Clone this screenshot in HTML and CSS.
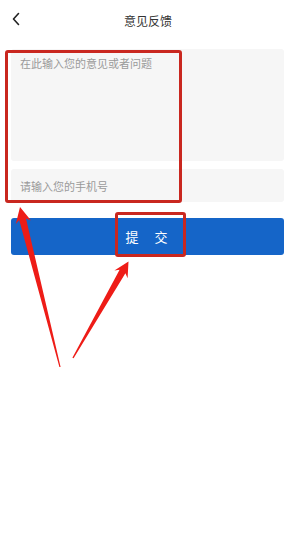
FILE: index.html
```html
<!DOCTYPE html>
<html lang="zh-CN">
<head>
  <meta charset="UTF-8">
  <meta name="viewport" content="width=device-width, initial-scale=1.0">
  <title>意见反馈</title>
  <link rel="stylesheet" href="styles.css">
</head>
<body>

<div class="page">
  <div class="header">
    <svg class="back" width="10" height="14" viewBox="0 0 10 14">
      <polyline points="7.5,1.5 2.5,7 7.5,12.5" fill="none" stroke="#222" stroke-width="1.6" stroke-linecap="round" stroke-linejoin="round"/>
    </svg>
    <h1>意见反馈</h1>
  </div>

  <form class="feedback">
    <textarea class="opinion" placeholder="在此输入您的意见或者问题"></textarea>
    <input class="phone" type="text" placeholder="请输入您的手机号">
    <button type="button" class="submit">提交</button>
  </form>

  <!-- annotation marks drawn over the screenshot -->
  <div class="mark mark-fields"></div>
  <div class="mark mark-button"></div>
  <svg class="arrows" width="296" height="553" viewBox="0 0 296 553">
    <polygon fill="#ee1c17" points="20,207 31,220.5 26,218.5 60.6,366.9 59.4,367.1 19.2,220 15.8,224"/>
    <polygon fill="#ee1c17" points="128.5,261.5 127.6,278.2 125.4,273.3 73.6,358.3 72.4,357.7 119.6,269.8 114.4,270.4"/>
  </svg>
</div>

</body>
</html>
```

FILE: styles.css
```css
* {
  box-sizing: border-box;
}

body {
  margin: 0;
  background-color: white;
  font-family: "Noto Sans CJK SC", "Noto Sans", sans-serif;
}

.page {
  position: relative;
  width: 296px;
  height: 553px;
  overflow: hidden;
}

.header {
  position: relative;
  height: 40px;
  display: flex;
  align-items: center;
  justify-content: center;
}

.back {
  position: absolute;
  left: 11px;
  top: 12px;
}

h1 {
  margin: 0;
  font-size: 12px;
  font-weight: normal;
  color: #333;
}

.feedback {
  display: flex;
  flex-direction: column;
  padding: 9px 12px 0 11px;
}

.opinion,
.phone {
  width: 100%;
  border: none;
  outline: none;
  border-radius: 3px;
  background-color: #f6f6f6;
  font-family: inherit;
  font-size: 11px;
  color: #333;
}

.opinion {
  height: 112px;
  padding: 6px 9px;
  resize: none;
}

.phone {
  height: 33px;
  margin-top: 8px;
  padding: 0 9px;
}

.opinion::placeholder,
.phone::placeholder {
  color: #9a9a9a;
}

.submit {
  height: 37px;
  margin-top: 16px;
  border: none;
  border-radius: 3px;
  background-color: #1565c8;
  color: white;
  font-family: inherit;
  font-size: 13px;
  letter-spacing: 16px;
  padding-left: 20px;
}

.mark {
  position: absolute;
  border: 3px solid #c9271f;
  border-radius: 3px;
}

.mark-fields {
  left: 5px;
  top: 50px;
  width: 177px;
  height: 153px;
}

.mark-button {
  left: 115px;
  top: 212px;
  width: 71px;
  height: 45px;
}

.arrows {
  position: absolute;
  left: 0;
  top: 0;
}
```
